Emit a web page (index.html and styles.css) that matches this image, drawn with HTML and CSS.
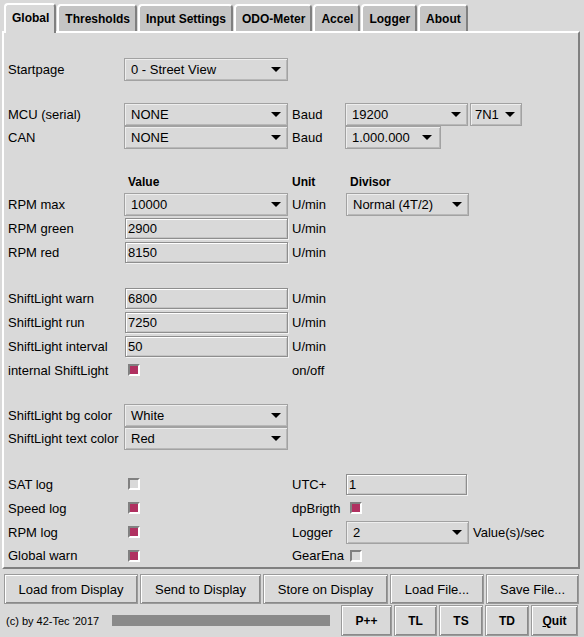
FILE: index.html
```html
<!DOCTYPE html>
<html>
<head>
<meta charset="utf-8">
<link rel="stylesheet" href="styles.css">
</head>
<body>
<div class="tabs">
  <div class="tab active">Global</div>
  <div class="tab">Thresholds</div>
  <div class="tab">Input Settings</div>
  <div class="tab">ODO-Meter</div>
  <div class="tab">Accel</div>
  <div class="tab">Logger</div>
  <div class="tab">About</div>
</div>
<div class="panel">
  <div class="row drow first">
    <div class="lbl">Startpage</div>
    <div class="dd"><span>0 - Street View</span><i class="arr"></i></div>
  </div>

  <div class="row drow gap">
    <div class="lbl">MCU (serial)</div>
    <div class="dd"><span>NONE</span><i class="arr"></i></div>
    <div class="unit">Baud</div>
    <div class="col4">
      <div class="dd w123"><span>19200</span><i class="arr"></i></div>
      <div class="dd w52"><span>7N1</span><i class="arr"></i></div>
    </div>
  </div>
  <div class="row drow">
    <div class="lbl">CAN</div>
    <div class="dd"><span>NONE</span><i class="arr"></i></div>
    <div class="unit">Baud</div>
    <div class="col4">
      <div class="dd w96"><span>1.000.000</span><i class="arr"></i></div>
    </div>
  </div>

  <div class="row drow gap head">
    <div class="lbl"></div>
    <div class="hcell">Value</div>
    <div class="unit">Unit</div>
    <div class="col4 hcell4">Divisor</div>
  </div>
  <div class="row drow">
    <div class="lbl">RPM max</div>
    <div class="dd"><span>10000</span><i class="arr"></i></div>
    <div class="unit">U/min</div>
    <div class="col4">
      <div class="dd w123 shift"><span>Normal (4T/2)</span><i class="arr"></i></div>
    </div>
  </div>
  <div class="row erow">
    <div class="lbl">RPM green</div>
    <div class="entry">2900</div>
    <div class="unit">U/min</div>
  </div>
  <div class="row erow">
    <div class="lbl">RPM red</div>
    <div class="entry">8150</div>
    <div class="unit">U/min</div>
  </div>

  <div class="row erow gap">
    <div class="lbl">ShiftLight warn</div>
    <div class="entry">6800</div>
    <div class="unit">U/min</div>
  </div>
  <div class="row erow">
    <div class="lbl">ShiftLight run</div>
    <div class="entry">7250</div>
    <div class="unit">U/min</div>
  </div>
  <div class="row erow">
    <div class="lbl">ShiftLight interval</div>
    <div class="entry">50</div>
    <div class="unit">U/min</div>
  </div>
  <div class="row erow">
    <div class="lbl">internal ShiftLight</div>
    <div class="cbcell"><span class="cb on"></span></div>
    <div class="unit">on/off</div>
  </div>

  <div class="row drow gap">
    <div class="lbl">ShiftLight bg color</div>
    <div class="dd"><span>White</span><i class="arr"></i></div>
  </div>
  <div class="row drow">
    <div class="lbl">ShiftLight text color</div>
    <div class="dd"><span>Red</span><i class="arr"></i></div>
  </div>

  <div class="row erow gap">
    <div class="lbl">SAT log</div>
    <div class="cbcell"><span class="cb"></span></div>
    <div class="unit">UTC+</div>
    <div class="col4"><div class="entry w121">1</div></div>
  </div>
  <div class="row erow">
    <div class="lbl">Speed log</div>
    <div class="cbcell"><span class="cb on"></span></div>
    <div class="unit">dpBrigth</div>
    <div class="col4"><span class="cb on cb4"></span></div>
  </div>
  <div class="row erow">
    <div class="lbl">RPM log</div>
    <div class="cbcell"><span class="cb on"></span></div>
    <div class="unit">Logger</div>
    <div class="col4">
      <div class="dd w123 shift"><span>2</span><i class="arr"></i></div>
      <span class="after">Value(s)/sec</span>
    </div>
  </div>
  <div class="row drow">
    <div class="lbl">Global warn</div>
    <div class="cbcell"><span class="cb on"></span></div>
    <div class="unit">GearEna</div>
    <div class="col4"><span class="cb cb4"></span></div>
  </div>
</div>

<div class="actions">
  <div class="btn">Load from Display</div>
  <div class="btn">Send to Display</div>
  <div class="btn">Store on Display</div>
  <div class="btn">Load File...</div>
  <div class="btn">Save File...</div>
</div>

<div class="footer">
  <div class="copy">(c) by 42-Tec '2017</div>
  <div class="bar"></div>
  <div class="fbtns">
    <div class="btn bold">P++</div>
    <div class="btn bold">TL</div>
    <div class="btn bold">TS</div>
    <div class="btn bold">TD</div>
    <div class="btn bold"><u>Q</u>uit</div>
  </div>
</div>
</body>
</html>
```
FILE: styles.css
```css
html, body {
  margin: 0;
  padding: 0;
  background: #d9d9d9;
}
body {
  width: 584px;
  height: 637px;
  overflow: hidden;
  font-family: "Liberation Sans", Arial, sans-serif;
  font-size: 13px;
  color: #000;
}

/* tabs */
.tabs {
  display: flex;
  align-items: flex-end;
  padding: 3px 0 0 4px;
  height: 31px;
  box-sizing: border-box;
  gap: 1px;
}
.tab {
  height: 27px;
  box-sizing: border-box;
  padding: 0 5px 0 6px;
  display: flex;
  align-items: center;
  font-weight: bold;
  font-size: 12px;
  background: #c4c4c4;
  border-top: 2px solid #fff;
  border-left: 2px solid #fff;
  border-right: 2px solid #808080;
  border-radius: 4px 4px 0 0;
}
.tab.active {
  background: #d9d9d9;
  height: 30px;
  padding-bottom: 3px;
  margin-bottom: -2px;
  position: relative;
  z-index: 1;
}

/* panel */
.panel {
  margin-left: 2px;
  width: 578px;
  height: 538px;
  box-sizing: border-box;
  border-top: 2px solid #fff;
  border-left: 2px solid #fff;
  border-right: 2px solid #808080;
  border-bottom: 2px solid #808080;
  padding-left: 4px;
}
.row {
  display: grid;
  grid-template-columns: 116px 164px 57px auto;
  align-items: center;
}
.drow { height: 23px; }
.erow { height: 24px; }
.row.first { margin-top: 25px; }
.row.gap { margin-top: 22px; }
.row.head { margin-top: 21px; }

.lbl { white-space: nowrap; }
.unit { padding-left: 4px; white-space: nowrap; }
.hcell { font-weight: bold; font-size: 12px; padding-left: 4px; }
.hcell4 { font-weight: bold; font-size: 12px; padding-left: 5px; }
.head .unit { font-weight: bold; font-size: 12px; }
.col4 {
  display: flex;
  align-items: center;
  gap: 2px;
}

/* option menu */
.dd {
  height: 23px;
  box-sizing: border-box;
  border: 1px solid #a2a2a2;
  box-shadow: inset 1px 1px 0 #eeeeee, inset -1px -1px 0 #b8b8b8;
  display: flex;
  align-items: center;
  justify-content: space-between;
  padding: 0 6px 0 6px;
  white-space: nowrap;
}
.dd.w123 { width: 123px; }
.dd.w52 { width: 52px; }
.dd.w96 { width: 96px; padding-right: 8px; }
.dd.shift { margin-left: 1px; }
.dd.w52 { padding-left: 4px; }
.arr {
  display: block;
  width: 0;
  height: 0;
  border-left: 5px solid transparent;
  border-right: 5px solid transparent;
  border-top: 5px solid #000;
  margin-left: 6px;
}

/* entries */
.entry {
  height: 21px;
  width: 163px;
  box-sizing: border-box;
  border: 1px solid #8e8e8e;
  box-shadow: inset 1px 1px 0 #ffffff, inset -1px -1px 0 #c4c4c4, 1px 1px 0 #f2f2f2;
  padding-left: 2px;
  display: flex;
  align-items: center;
  margin-left: 1px;
}
.entry.w121 { width: 121px; margin-left: 1px; }

/* checkboxes */
.cbcell { padding-left: 4px; display: flex; align-items: center; }
.cb {
  display: block;
  width: 12px;
  height: 12px;
  box-sizing: border-box;
  border-top: 2px solid #808080;
  border-left: 2px solid #808080;
  border-right: 2px solid #fff;
  border-bottom: 2px solid #fff;
  background: #d9d9d9;
}
.cb.on { background: #b03060; }
.cb4 { margin-left: 5px; }
.after { padding-left: 2px; white-space: nowrap; }

/* buttons */
.actions {
  display: grid;
  grid-template-columns: 134px 121px 125px 94px 93px;
  gap: 2px;
  margin: 5px 0 0 4px;
  height: 30px;
}
.btn {
  box-sizing: border-box;
  border: 1px solid #9a9a9a;
  box-shadow: inset 1px 1px 0 #ffffff, inset -1px -1px 0 #8a8a8a;
  display: flex;
  align-items: center;
  justify-content: center;
  white-space: nowrap;
}
.btn.bold { font-weight: bold; font-size: 12px; }

.footer {
  display: flex;
  align-items: center;
  height: 31px;
  margin-top: 1px;
}
.copy {
  width: 106px;
  padding-left: 6px;
  font-size: 11px;
  white-space: nowrap;
}
.bar {
  width: 218px;
  height: 11px;
  background: #8a8a8a;
}
.fbtns {
  margin-left: 11px;
  display: grid;
  grid-template-columns: 51px 43px 44px 44px 47px;
  gap: 2px;
  height: 31px;
}
```
